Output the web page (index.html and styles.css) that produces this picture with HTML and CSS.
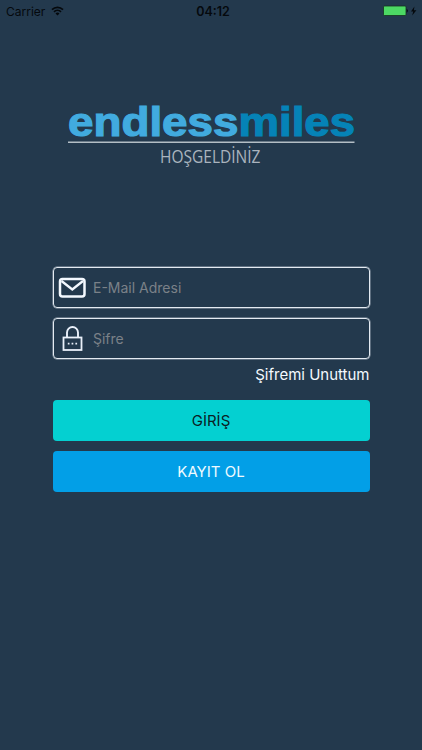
FILE: index.html
```html
<!DOCTYPE html>
<html lang="tr">
<head>
  <meta charset="UTF-8">
  <meta name="viewport" content="width=device-width, initial-scale=1">
  <title>endlessmiles</title>
  <link rel="stylesheet" href="styles.css">
</head>
<body>

  <!-- Status bar -->
  <header class="status-bar">
    <div class="carrier">
      <span>Carrier</span>
      <svg class="wifi" viewBox="0 0 13 10" width="13" height="10">
        <path d="M1 3.7a7.8 7.8 0 0 1 11 0M3 5.9a5 5 0 0 1 7 0" fill="none" stroke="#05090d" stroke-width="1.7"/>
        <path d="M4.5 7.5a2.9 2.9 0 0 1 4 0L6.5 9.6z" fill="#05090d"/>
      </svg>
    </div>
    <div class="time">04:12</div>
    <div class="power">
      <svg viewBox="0 0 35 12" width="35" height="12">
        <rect x="0.5" y="1" width="22.5" height="9.5" rx="1" fill="#4cd964" stroke="#15311f" stroke-width="0.8"/>
        <path d="M23.7 3.8q2.4 2 0 4z" fill="#05090d"/>
        <path d="M31.4 1.5L28 6.6H30.2L29.2 10.5L33.4 5.2H30.9z" fill="#05090d"/>
      </svg>
    </div>
  </header>

  <main class="login">
    <div class="logo">
      <svg viewBox="0 -12 288 84" width="288" height="84">
        <g class="brand">
          <text class="endless" x="1" y="33" textLength="170.5" lengthAdjust="spacingAndGlyphs">endless</text>
          <text class="miles" x="171.5" y="33" textLength="116.5" lengthAdjust="spacingAndGlyphs">miles</text>
        </g>
        <rect x="1" y="38.5" width="286.5" height="1.5" fill="#b3bec5"/>
        <text class="welcome" x="93" y="60" textLength="100.5" lengthAdjust="spacingAndGlyphs">HOŞGELDİNİZ</text>
      </svg>
    </div>

    <form class="form">
      <label class="field">
        <svg viewBox="0 0 28 28" width="28" height="28">
          <rect x="2" y="5" width="24.5" height="17.5" rx="2.5" fill="none" stroke="#f4f9ff" stroke-width="2.5"/>
          <path d="M3.5 7L14.3 15.5L25 7" fill="none" stroke="#f4f9ff" stroke-width="2.3"/>
        </svg>
        <input type="text" placeholder="E-Mail Adresi">
      </label>
      <label class="field">
        <svg viewBox="0 0 28 28" width="28" height="28">
          <rect x="5.5" y="12.5" width="18" height="12.5" fill="none" stroke="#e9f0fa" stroke-width="1.8"/>
          <path d="M9 12V7.500a5.500 5.500 0 0 1 11 0V12" fill="none" stroke="#e9f0fa" stroke-width="1.9"/>
          <path d="M9.8 17.700h1.700v1.700H9.800zM13.600 17.700h1.700v1.700h-1.700zM17.400 17.700h1.700v1.700h-1.700z" fill="#e9f0fa"/>
        </svg>
        <input type="password" placeholder="Şifre">
      </label>
      <a class="forgot">Şifremi Unuttum</a>
      <button type="button" class="btn btn-login">GİRİŞ</button>
      <button type="button" class="btn btn-register">KAYIT OL</button>
    </form>
  </main>

</body>
</html>
```

FILE: styles.css
```css
:root {
  --bg: #23394d;
  --login: #04d0d1;
  --register: #029fe7;
  --dark: #05090d;
}

* {
  box-sizing: border-box;
  margin: 0;
  padding: 0;
}

body {
  height: 750px;
  background: var(--bg);
  font-family: Inter, "Liberation Sans", sans-serif;
  overflow: hidden;
}

.status-bar {
  display: grid;
  grid-template-columns: 1fr auto 1fr;
  align-items: center;
  height: 22px;
  padding: 0 4px 0 6px;
  color: var(--dark);
  font-size: 12px;
}

.carrier {
  display: flex;
  align-items: center;
  gap: 5.5px;
}

.time {
  padding-left: 2px;
  font-size: 12.5px;
  font-weight: 600;
}

.power {
  display: flex;
  justify-content: flex-end;
}

.login {
  padding: 69px 52.5px 0;
}

.logo {
  display: flex;
  justify-content: center;
}

.logo svg {
  flex: none;
}

.brand {
  font-family: "Liberation Sans", sans-serif;
  font-size: 41.5px;
  font-weight: bold;
  stroke-width: 1.2;
}

.endless {
  fill: #41abdf;
  stroke: #41abdf;
}

.miles {
  fill: #0583b7;
  stroke: #0583b7;
}

.welcome {
  font-family: "Open Sans", sans-serif;
  font-size: 17.5px;
  fill: #aab4be;
}

.form {
  display: flex;
  flex-direction: column;
  margin-top: 92px;
}

.field {
  display: flex;
  align-items: center;
  height: 41px;
  margin-bottom: 10px;
  padding: 0 5px 0 4px;
  border: 1.5px solid #e3eaf1;
  border-radius: 4px;
  box-shadow: 0 0 0 0.5px #9ba8b5;
}

.field input {
  flex: 1;
  min-width: 0;
  margin-left: 7.5px;
  border: 0;
  outline: 0;
  background: none;
  color: #fff;
  font: 14px Inter, sans-serif;
}

.field input::placeholder {
  color: #7b8188;
}

.forgot {
  align-self: flex-end;
  height: 31px;
  color: #f4faff;
  font-size: 15px;
  line-height: 12px;
}

.btn {
  height: 41px;
  border: 0;
  border-radius: 4px;
  font: 15px Inter, sans-serif;
}

.btn-login {
  margin-bottom: 10px;
  background: var(--login);
  color: #0b2024;
}

.btn-register {
  background: var(--register);
  color: #effaff;
}
```
